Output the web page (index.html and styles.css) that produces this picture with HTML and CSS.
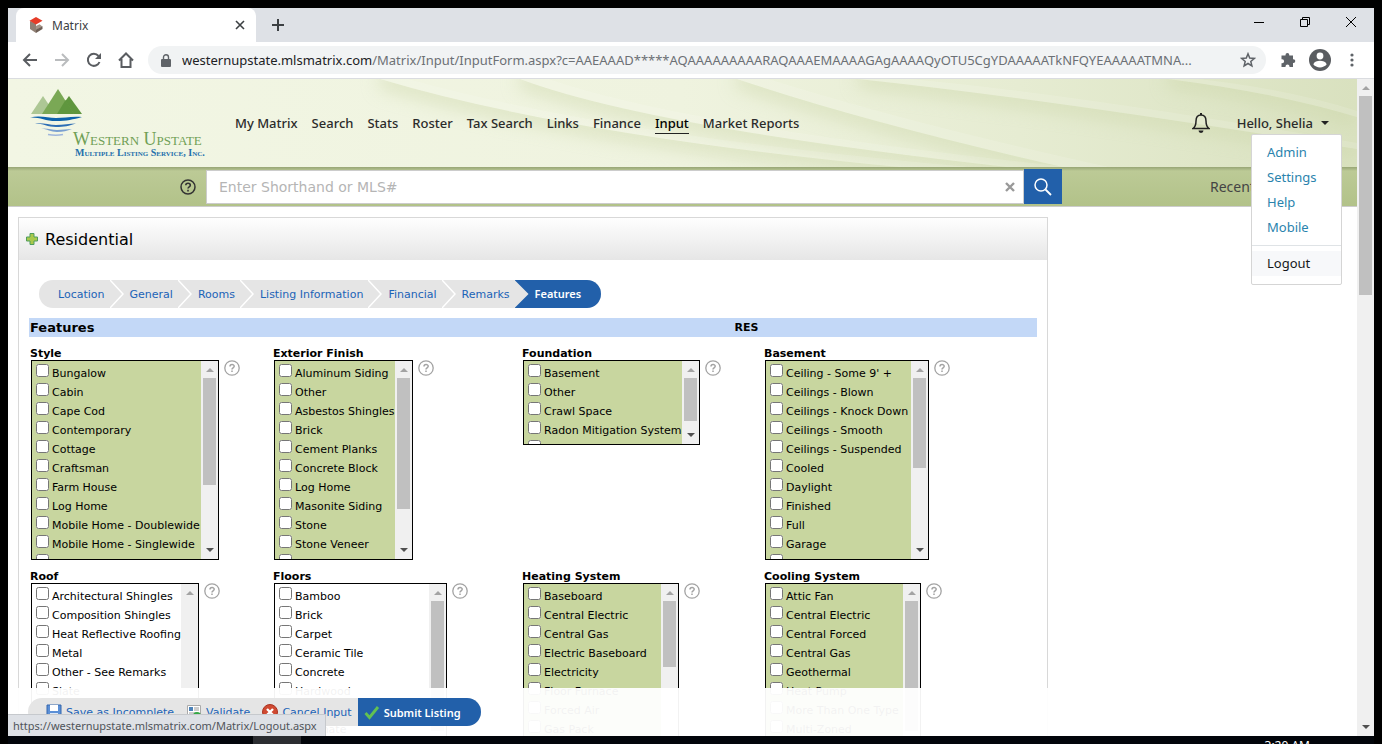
FILE: index.html
```html
<!DOCTYPE html>
<html lang="en">
<head>
<meta charset="utf-8">
<title>Matrix</title>
<link rel="stylesheet" href="styles.css">
</head>
<body>
<div class="window">
  <div class="tabstrip">
    <div class="tab">
      <svg width="16" height="16" viewBox="0 0 16 16"><path d="M2 4l6 2.500V16l-6-4z" fill="#8f7f74"/><path d="M8 0l6.500 3.800L8 7.600 1.500 3.800z" fill="#e63c28"/><path d="M8 9l3.500-1.700 3 2.200L8 12.800z" fill="#a39488"/><path d="M8 12.500l6.500-3.200V12L8 16z" fill="#6e5f56"/></svg>
      <span class="tab-title">Matrix</span>
      <button class="plain" aria-label="Close tab"><svg width="10" height="10" viewBox="0 0 10 10"><path d="M1 1l8 8M9 1L1 9" stroke="#3c4043" stroke-width="1.600"/></svg></button>
    </div>
    <button class="plain new-tab" aria-label="New tab"><svg width="12" height="12" viewBox="0 0 12 12"><path d="M6 0v12M0 6h12" stroke="#3c4043" stroke-width="2"/></svg></button>
    <div class="win-controls">
      <button class="plain" aria-label="Minimize"><svg width="10" height="10" viewBox="0 0 10 10"><path d="M0 5.500h10" stroke="#000"/></svg></button>
      <button class="plain" aria-label="Restore"><svg width="10" height="10" viewBox="0 0 10 10"><path d="M.5 2.500h7v7h-7zM2.500 2.500v-2h7v7h-2" fill="none" stroke="#000"/></svg></button>
      <button class="plain" aria-label="Close"><svg width="10" height="10" viewBox="0 0 10 10"><path d="M0 0l10 10M10 0L0 10" stroke="#000"/></svg></button>
    </div>
  </div>
  <div class="toolbar">
    <button class="plain" aria-label="Back"><svg width="16" height="16" viewBox="0 0 16 16"><path d="M15 8H2M8 2L2 8l6 6" fill="none" stroke="#5a5d61" stroke-width="2"/></svg></button>
    <button class="plain" aria-label="Forward"><svg width="16" height="16" viewBox="0 0 16 16"><path d="M1 8h13M8 2l6 6-6 6" fill="none" stroke="#babcbe" stroke-width="2"/></svg></button>
    <button class="plain" aria-label="Reload"><svg width="16" height="16" viewBox="0 0 16 16"><path d="M13.500 10A6 6 0 1 1 12.500 4" fill="none" stroke="#5a5d61" stroke-width="2"/><path d="M15 1v6H9z" fill="#5a5d61"/></svg></button>
    <button class="plain" aria-label="Home"><svg width="16" height="16" viewBox="0 0 16 16"><path d="M1 8.500L8 1.500l7 7M3.500 7v8h9V7" fill="none" stroke="#5a5d61" stroke-width="2"/></svg></button>
    <div class="omnibox">
      <svg width="10" height="13" viewBox="0 0 10 13"><path d="M1 5h8a1 1 0 0 1 1 1v6a1 1 0 0 1-1 1H1a1 1 0 0 1-1-1V6a1 1 0 0 1 1-1z" fill="#5f6368"/><path d="M2.500 5V3.200a2.500 2.500 0 0 1 5 0V5" fill="none" stroke="#5f6368" stroke-width="1.400"/></svg>
      <span class="url"><b>westernupstate.mlsmatrix.com</b>/Matrix/Input/InputForm.aspx?c=AAEAAAD*****AQAAAAAAAAARAQAAAEMAAAAGAgAAAAQyOTU5CgYDAAAAATkNFQYEAAAAATMNA...</span>
      <button class="plain" aria-label="Bookmark"><svg width="16" height="16" viewBox="0 0 16 16"><path d="M8 1.800l1.700 4.300 4.600.3-3.500 3 1.100 4.500L8 11.500l-3.900 2.400 1.100-4.500-3.500-3 4.600-.3z" fill="none" stroke="#5f6368" stroke-width="1.500"/></svg></button>
    </div>
    <button class="plain" aria-label="Extensions"><svg width="16" height="16" viewBox="0 0 16 16"><path d="M2 3.500h3.500V3a1.900 1.900 0 0 1 3.800 0v.5H13v3.700h.4a1.900 1.900 0 0 1 0 3.800H13v4H9.500v-.6a2 2 0 0 0-4 0v.6H1.500v-3.800h.6a2 2 0 0 0 0-4h-.6V3.500z" fill="#5f6368"/></svg></button>
    <button class="plain profile" aria-label="Profile"><svg width="22" height="22" viewBox="0 0 22 22"><circle cx="11" cy="11" r="11" fill="#5a5d61"/><circle cx="11" cy="7" r="3.400" fill="#fff"/><path d="M4.300 15.300c1-2.600 4-3.500 6.700-3.500s5.700.9 6.700 3.500c-3 4.200-10.400 4.200-13.400 0z" fill="#fff"/></svg></button>
    <button class="plain" aria-label="Menu"><svg width="4" height="14" viewBox="0 0 4 14" fill="#5f6368"><circle cx="2" cy="2" r="1.600"/><circle cx="2" cy="7" r="1.600"/><circle cx="2" cy="12" r="1.600"/></svg></button>
  </div>

  <div class="viewport">
    <div class="page">
      <header class="site-header">
        <svg class="waves" viewBox="0 0 1349 88" preserveAspectRatio="none">
          <defs>
            <linearGradient id="base" x1="0" y1="0" x2="1" y2="0"><stop offset="0" stop-color="#f2f6e4"/><stop offset=".5" stop-color="#eff3df"/><stop offset=".75" stop-color="#e6ecd2"/><stop offset="1" stop-color="#d9e1bf"/></linearGradient>
            <filter id="soft" x="-10%" y="-50%" width="120%" height="200%"><feGaussianBlur stdDeviation="9"/></filter>
            <clipPath id="c1"><path d="M372 0Q560 56 892 88H0V0z"/></clipPath>
            <clipPath id="c2"><path d="M512 0Q640 48 1000 88H0V0z"/></clipPath>
            <clipPath id="c3"><path d="M729 0Q860 44 1055 88H0V0z"/></clipPath>
            <clipPath id="c4"><path d="M850 0Q1040 20 1349 70V88H0V0z"/></clipPath>
            <clipPath id="c5"><path d="M1160 0Q1270 14 1349 38V88H0V0z"/></clipPath>
          </defs>
          <rect width="1349" height="88" fill="url(#base)"/>
          <g fill="none" stroke="#cbd6a8" stroke-width="18" opacity=".5">
            <g clip-path="url(#c1)"><path filter="url(#soft)" d="M372 0Q560 56 892 88"/></g>
            <g clip-path="url(#c2)"><path filter="url(#soft)" d="M512 0Q640 48 1000 88"/></g>
            <g clip-path="url(#c3)"><path filter="url(#soft)" d="M729 0Q860 44 1055 88"/></g>
            <g clip-path="url(#c4)"><path filter="url(#soft)" d="M850 0Q1040 20 1349 70"/></g>
            <g clip-path="url(#c5)"><path filter="url(#soft)" d="M1160 0Q1270 14 1349 38"/></g>
          </g>
          <g fill="#fff" opacity=".12">
            <path d="M372 0Q560 56 892 88H960Q600 56 400 0z"/>
            <path d="M512 0Q640 48 1000 88H1060Q680 48 540 0z"/>
            <path d="M729 0Q860 44 1055 88H1100Q900 44 760 0z"/>
            <path d="M850 0Q1040 20 1349 70V64Q1060 14 900 0z"/>
            <path d="M1160 0Q1270 14 1349 38V32Q1280 10 1190 0z"/>
          </g>
        </svg>
        <svg class="logo" width="180" height="72" viewBox="0 0 180 72" role="img" aria-label="Western Upstate Multiple Listing Service, Inc.">
          <path d="M3 29l12-18 12 18z" fill="#adc795"/><path d="M41 11l13 18H28z" fill="#5f963e"/><path d="M30 4l16 25H14z" fill="#7aa855"/><path d="M29 29l8.500-14L46 29z" fill="#5f963e"/>
          <path d="M2 32.500c10-2.500 18 .5 26 .5s16-2 26-1c-9 2.500-15 4-26 4s-16-4-26-3.500z" fill="#0d63ac"/>
          <path d="M7 38.500c8-1 14 1.500 21 1.500s14-1.500 20-1.500c-7 2.500-12 3.500-20 3.500s-13-3.500-21-3.500z" fill="#2d6eb5"/>
          <path d="M13 43.500c7-.5 11 1.500 16 1.500s10-1 15-1c-5 2-9 3-15 3s-10-3-16-3.500z" fill="#7aa0d0"/>
          <path d="M20 49.500q8 1.500 15 0" fill="none" stroke="#9fb6dc" stroke-width="1.500"/>
          <text x="45" y="60" class="logo-name">Western Upstate</text>
          <text x="47" y="71" class="logo-sub">Multiple Listing Service, Inc.</text>
        </svg>
        <nav class="main-nav">
          <a href="#">My Matrix</a><a href="#">Search</a><a href="#">Stats</a><a href="#">Roster</a><a href="#">Tax Search</a><a href="#">Links</a><a href="#">Finance</a><a href="#" class="current">Input</a><a href="#">Market Reports</a>
        </nav>
        <button class="plain bell" aria-label="Notifications"><svg width="18" height="20" viewBox="0 0 18 20"><path d="M9 2C5 2 4 5 4 8c0 4-1 6-3 7.500h16C15 14 14 12 14 8c0-3-1-6-5-6z" fill="none" stroke="#222" stroke-width="1.500"/><path d="M9 0v2" stroke="#222" stroke-width="2"/><path d="M6.500 17.500h5a2.500 2.500 0 0 1-5 0z" fill="#222"/></svg></button>
        <div class="account">
          <button class="plain account-btn">Hello, Shelia <i class="caret"></i></button>
          <div class="menu">
            <a href="#">Admin</a><a href="#">Settings</a><a href="#">Help</a><a href="#">Mobile</a>
            <hr>
            <a href="#" class="hover">Logout</a>
          </div>
        </div>
      </header>

      <div class="search-bar">
        <svg class="search-help" width="16" height="16" viewBox="0 0 16 16"><circle cx="8" cy="8" r="7" fill="none" stroke="#333" stroke-width="1.500"/><path d="M5.800 6.300C5.800 3.600 10.300 3.700 10.300 6.200 10.300 7.800 8 7.800 8 9.500M8 10.800v1.600" fill="none" stroke="#333" stroke-width="1.600"/></svg>
        <div class="search-box">
          <input type="text" placeholder="Enter Shorthand or MLS#" aria-label="Enter Shorthand or MLS#">
          <button class="plain" aria-label="Clear"><svg width="10" height="10" viewBox="0 0 10 10"><path d="M1 1l8 8M9 1L1 9" stroke="#999" stroke-width="2.400"/></svg></button>
        </div>
        <button class="plain search-btn" aria-label="Search"><svg width="18" height="18" viewBox="0 0 18 18"><circle cx="7" cy="7" r="6" fill="none" stroke="#fff" stroke-width="1.500"/><path d="M11.500 11.500L17 17" stroke="#fff" stroke-width="1.800"/></svg></button>
        <span class="recent">Recent</span>
      </div>

      <main class="panel">
        <h1 class="panel-title"><svg width="12" height="12" viewBox="0 0 12 12"><path d="M4 .5h4V4h3.500v4H8v3.500H4V8H.5V4H4z" fill="#a9c84b" stroke="#4f9d5d"/></svg>Residential</h1>
        <nav class="steps">
          <a href="#">Location</a><svg class="sep"><path d="M0 0l13 14L0 28"/></svg>
          <a href="#">General</a><svg class="sep"><path d="M0 0l13 14L0 28"/></svg>
          <a href="#">Rooms</a><svg class="sep"><path d="M0 0l13 14L0 28"/></svg>
          <a href="#">Listing Information</a><svg class="sep"><path d="M0 0l13 14L0 28"/></svg>
          <a href="#">Financial</a><svg class="sep"><path d="M0 0l13 14L0 28"/></svg>
          <a href="#">Remarks</a>
          <a href="#" class="active">Features</a>
        </nav>
        <div class="section-bar"><h2>Features</h2><span>RES</span></div>
        <div class="fields" id="fields"></div>
      </main>

      <div class="actions">
        <div class="action-group">
          <button class="plain"><svg width="16" height="16" viewBox="0 0 16 16"><path d="M1 1h14v14H1z" fill="#5b8fd6" stroke="#3566ad"/><path d="M4 1h8v6H4z" fill="#fff"/><path d="M4 9h8v6H4z" fill="#dce8f7"/></svg>Save as Incomplete</button>
          <button class="plain"><svg width="16" height="16" viewBox="0 0 16 16"><path d="M1.500 1.500h13v11h-13z" fill="#fff" stroke="#aaa"/><path d="M3 3h4v4H3z" fill="#4c82b8"/><path d="M8 4h5M8 6h5M3 9h7" stroke="#999"/><circle cx="11" cy="12" r="4" fill="#35a845"/></svg>Validate</button>
          <button class="plain"><svg width="16" height="16" viewBox="0 0 16 16"><circle cx="8" cy="8" r="7.500" fill="#cf4a32" stroke="#a93322"/><path d="M5 5l6 6M11 5l-6 6" stroke="#fff" stroke-width="2.400"/></svg>Cancel Input</button>
          <button class="plain submit"><svg width="16" height="16" viewBox="0 0 16 16"><path d="M1.500 9l4 4.500L14 3" fill="none" stroke="#62c152" stroke-width="2.800"/></svg>Submit Listing</button>
        </div>
      </div>
    </div>
    <div class="sbar page-sbar"><i class="up"></i><i class="thumb"></i><i class="down"></i></div>
    <div class="status">https://westernupstate.mlsmatrix.com/Matrix/Logout.aspx</div>
  </div>
</div>
<div class="taskbar"><div class="task"></div><span class="clock">3:20 AM</span></div>
<script src="fields.js"></script>
</body>
</html>
```
FILE: fields.js
```js
const fields = [
  { name: 'Style', width: 188, thumb: 107, green: true, items: ['Bungalow', 'Cabin', 'Cape Cod', 'Contemporary', 'Cottage', 'Craftsman', 'Farm House', 'Log Home', 'Mobile Home - Doublewide', 'Mobile Home - Singlewide', 'Modular'] },
  { name: 'Exterior Finish', width: 139, thumb: 131, green: true, items: ['Aluminum Siding', 'Other', 'Asbestos Shingles', 'Brick', 'Cement Planks', 'Concrete Block', 'Log Home', 'Masonite Siding', 'Stone', 'Stone Veneer', 'Stucco-Synthetic'] },
  { name: 'Foundation', width: 177, thumb: 43, green: true, short: true, items: ['Basement', 'Other', 'Crawl Space', 'Radon Mitigation System', 'Slab'] },
  { name: 'Basement', width: 164, thumb: 90, green: true, items: ["Ceiling - Some 9' +", 'Ceilings - Blown', 'Ceilings - Knock Down', 'Ceilings - Smooth', 'Ceilings - Suspended', 'Cooled', 'Daylight', 'Finished', 'Full', 'Garage', 'Heated'] },
  { name: 'Roof', width: 168, thumb: 0, items: ['Architectural Shingles', 'Composition Shingles', 'Heat Reflective Roofing', 'Metal', 'Other - See Remarks', 'Slate'] },
  { name: 'Floors', width: 173, thumb: 130, items: ['Bamboo', 'Brick', 'Carpet', 'Ceramic Tile', 'Concrete', 'Hardwood', 'Laminate', 'Laminate'] },
  { name: 'Heating System', width: 156, thumb: 66, green: true, items: ['Baseboard', 'Central Electric', 'Central Gas', 'Electric Baseboard', 'Electricity', 'Floor Furnace', 'Forced Air', 'Gas Pack'] },
  { name: 'Cooling System', width: 156, thumb: 130, green: true, items: ['Attic Fan', 'Central Electric', 'Central Forced', 'Central Gas', 'Geothermal', 'Heat Pump', 'More Than One Type', 'Multi-Zoned'] }
];

const help = '<svg class="help" width="16" height="16" viewBox="0 0 16 16"><circle cx="8" cy="8" r="7.200" fill="none" stroke="#a3a3a3" stroke-width="1.300"/><path d="M6 6.400C6 4 10.200 4 10.200 6.300 10.200 7.800 8 7.800 8 9.400M8 10.600v1.500" fill="none" stroke="#a3a3a3" stroke-width="1.500"/></svg>';

document.getElementById('fields').innerHTML = fields.map(f => `
  <fieldset class="field">
    <legend>${f.name}</legend>
    <div class="field-row">
      <div class="listbox${f.green ? ' green' : ''}${f.short ? ' short' : ''}" style="width:${f.width}px">
        <div class="options">${f.items.map(t => `<label><input type="checkbox">${t}</label>`).join('')}</div>
        <div class="sbar"><i class="up"></i>${f.thumb ? `<i class="thumb" style="height:${f.thumb}px"></i>` : ''}<i class="down"></i></div>
      </div>${help}
    </div>
  </fieldset>`).join('');
```
FILE: styles.css
```css
* { box-sizing: border-box; }
body { margin: 0; height: 100vh; display: flex; flex-direction: column; background: #000; padding: 8px 8px 0; overflow: hidden; font-family: "DejaVu Sans", Verdana, sans-serif; font-size: 11px; color: #000; }
a { text-decoration: none; }
svg { display: block; flex: none; }
.plain { border: 0; background: none; padding: 0; margin: 0; font: inherit; color: inherit; display: flex; align-items: center; white-space: nowrap; }

.window { flex: 1; min-height: 0; display: flex; flex-direction: column; background: #fff; }
.tabstrip { flex: none; display: flex; height: 34px; background: #dee1e6; padding-left: 8px; }
.tab { width: 240px; background: #fff; border-radius: 8px 8px 0 0; display: flex; align-items: center; gap: 8px; padding: 0 11px 0 12px; font: 12px "Noto Sans", sans-serif; color: #3c4043; }
.tab-title { flex: 1; }
.new-tab { margin-left: 16px; }
.win-controls { margin-left: auto; display: flex; gap: 36px; padding: 0 18px 6px 0; }
.toolbar { flex: none; display: flex; align-items: center; height: 37px; border-bottom: 1px solid #dadce0; padding: 0 20px 0 14px; gap: 16px; }
.omnibox { flex: 1; min-width: 0; height: 28px; margin: 0 -2px; border-radius: 14px; background: #f1f3f4; display: flex; align-items: center; padding: 0 10px 0 13px; gap: 11px; font: 13px "Noto Sans", sans-serif; color: #6c7075; }
.url { flex: 1; overflow: hidden; white-space: nowrap; }
.url b { font-weight: 400; color: #202124; }
.profile { margin: 0 3px 0 -3px; }

.viewport { flex: 1; min-height: 0; display: flex; position: relative; }
.page { flex: 1; min-width: 0; overflow: hidden; }
.site-header { position: relative; height: 88px; display: flex; align-items: center; padding-left: 20px; padding-right: 28px; font-family: "Noto Sans", sans-serif; font-size: 13px; color: #2b2b2b; }
.waves { position: absolute; inset: 0; width: 100%; height: 100%; }
.logo { position: relative; margin-bottom: 4px; }
.logo-name { font: 18px "Liberation Serif", serif; font-variant: small-caps; fill: #6f9f55; }
.logo-sub { font: bold 10px "Liberation Serif", serif; font-variant: small-caps; fill: #2470ac; }
.main-nav { position: relative; display: flex; gap: 14px; margin-left: 27px; font-weight: 500; }
.main-nav a { color: inherit; line-height: 20px; border-bottom: 1px solid transparent; }
.main-nav .current { color: #000; border-color: #222; }
.bell { position: relative; margin-left: auto; }
.account { position: relative; margin-left: 27px; }
.account-btn { font-weight: 500; line-height: 20px; }
.caret { margin-left: 8px; border: 4px solid transparent; border-top-color: #222; border-bottom: 0; }
.menu { position: absolute; z-index: 3; top: 21px; right: -13px; width: 91px; background: #fff; border: 1px solid #d5d5d5; border-radius: 2px; padding: 5px 0 8px; }
.menu a { display: block; line-height: 25px; padding-left: 15px; color: #2a83ad; }
.menu hr { border: 0; border-top: 1px solid #dfe3e6; margin: 5px 0; }
.menu .hover { background: #f7f8fa; color: #16181b; }

.search-bar { display: flex; height: 40px; align-items: center; background: linear-gradient(#97a575, #bcca96 4px, #b2c289); border-bottom: 1px solid #ccc; padding: 0 0 0 172px; }
.search-box { flex: 0 1 818px; display: flex; align-items: center; height: 34px; margin-left: 10px; background: #fff; border: 1px solid #ccc; padding-right: 8px; }
.search-box input { flex: 1; border: 0; outline: 0; padding: 0 12px; font: 14px "DejaVu Sans", sans-serif; }
.search-box input::placeholder { color: #b5b5b5; }
.search-btn { width: 38px; height: 35px; background: #2260aa; justify-content: center; }
.recent { margin-left: auto; width: 147px; font: 14px "Noto Sans", sans-serif; color: #444; }

.panel { max-width: 1030px; margin: 10px 10px 0; border: 1px solid #d8d8d8; }
.panel-title { margin: 0; display: flex; align-items: center; gap: 7px; padding-left: 7px; height: 42px; font-size: 16px; font-weight: 400; background: linear-gradient(#fefefe, #e6e6e6); }
.steps { display: flex; width: fit-content; height: 28px; margin: 20px 20px 10px; border-radius: 14px; background: #e5e5e5; overflow: hidden; padding-left: 13px; }
.steps a { color: #1b63b7; line-height: 29px; padding: 0 5px 0 6px; }
.steps .active { background: #2260aa; color: #fff; font-weight: 600; font-family: "Noto Sans", sans-serif; line-height: 28px; padding: 0 20px; clip-path: polygon(0 0, 100% 0, 100% 100%, 0 100%, 14px 50%); }
.sep { width: 14px; height: 28px; fill: none; stroke: #fff; stroke-width: 1.5; }
.section-bar { display: grid; grid-template-columns: 7fr 3fr; align-items: center; height: 19px; margin: 0 10px; background: #c3d8f7; font-weight: 700; }
.section-bar h2 { margin: 0 0 0 1px; font-size: 13px; }
.fields { display: grid; grid-template-columns: 243px 249px 242px 1fr; row-gap: 11px; margin: 11px 11px 0; }
.field { border: 0; margin: 0; padding: 0; min-width: 0; }
.field legend { padding: 0; font-weight: 700; line-height: 12px; }
.field-row { display: flex; gap: 5px; margin-left: 1px; }
.listbox { display: flex; height: 200px; border: 1px solid #000; }
.listbox.short { height: 85px; }
.options { flex: 1; min-width: 0; overflow: hidden; padding-top: 3px; }
.green .options { background: #c8d69f; }
.options label { display: flex; height: 19px; line-height: 19px; white-space: nowrap; }
.options input { flex: none; width: 13px; height: 13px; margin: 0 3px 0 4px; }
.sbar { flex: none; width: 17px; background: #f0f0f0; display: flex; flex-direction: column; align-items: center; }
.sbar .up { border: 4px solid transparent; border-top: 0; border-bottom-color: #a3a3a3; margin: 7px 0 6px; }
.sbar .thumb { width: 13px; background: #c0c0c0; }
.sbar .down { border: 4px solid transparent; border-bottom: 0; border-top-color: #505050; margin: auto 0 7px; }
.page-sbar .thumb { height: 199px; }

.actions { position: absolute; z-index: 2; left: 0; right: 17px; bottom: 0; height: 48px; background: rgba(255, 255, 255, .95); padding: 10px 20px; }
.action-group { display: flex; width: fit-content; height: 28px; border-radius: 14px; background: #e5e5e5; overflow: hidden; padding-left: 12px; color: #1b63b7; }
.action-group button { gap: 4px; padding: 0 6px; }
.action-group .submit { background: #2260aa; color: #fff; font: 600 11px "Noto Sans", sans-serif; padding: 0 20px 0 6px; }
.status { position: absolute; z-index: 4; left: 0; bottom: 0; height: 22px; line-height: 21px; padding: 0 8px 0 5px; background: #dee1e6; border-top: 1px solid #c6c9cd; border-right: 1px solid #c6c9cd; font-family: "Noto Sans", sans-serif; font-size: 11px; color: #50545a; }
.taskbar { flex: none; height: 8px; overflow: hidden; display: flex; background: #02050a; padding: 0 64px 0 245px; justify-content: space-between; }
.task { width: 48px; background: #2b2d31; }
.clock { font: 12px "Noto Sans", sans-serif; color: #fff; padding-top: 2px; line-height: 16px; }
```
